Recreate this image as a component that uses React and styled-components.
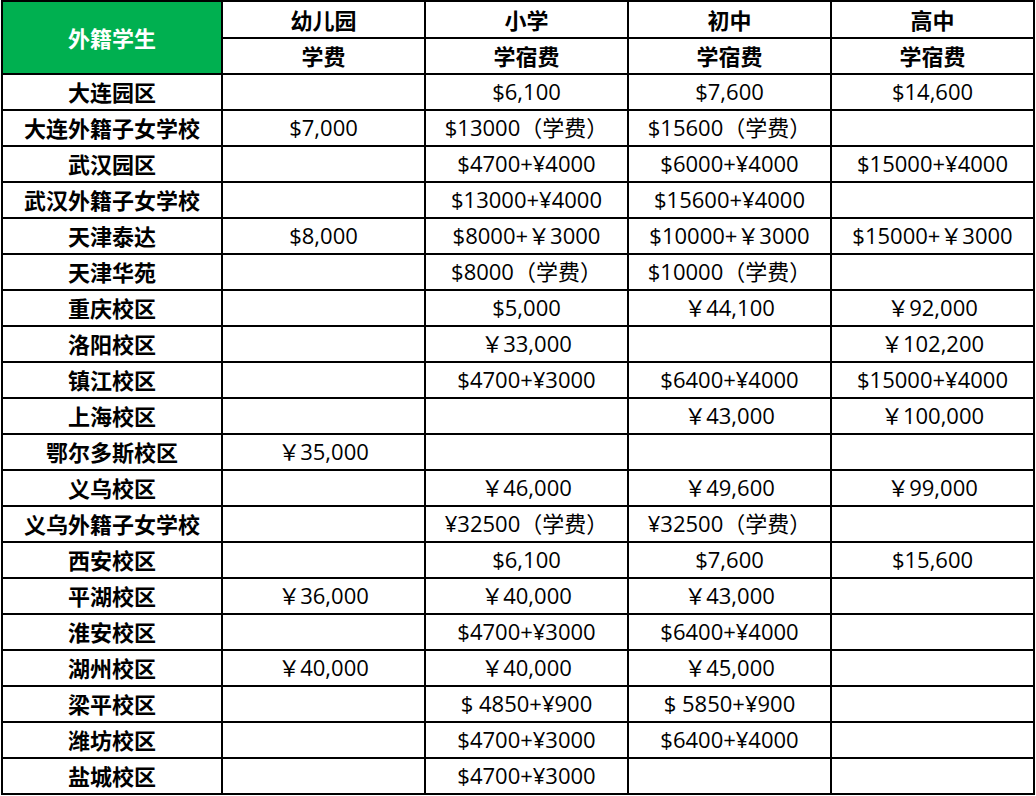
import React from "react";
import styled, { createGlobalStyle } from "styled-components";

const Global = createGlobalStyle`
  html, body { margin: 0; padding: 0; background: #fff; }
  body { font-family: "Open Sans", "Noto Sans CJK SC", sans-serif; color: #000; }
  * { box-sizing: border-box; }
`;

const Page = styled.div`
  padding: 0 0 0 1px;
`;

const Sheet = styled.div`
  display: grid;
  grid-template-columns: 220px repeat(4, 203px);
  grid-template-rows: 37px 36px repeat(20, 36px);
  width: 1034px;
  border-left: 2px solid #000;
  border-top: 2px solid #000;
`;

const Row = styled.div`
  display: contents;
`;

const BaseCell = styled.div`
  display: flex;
  align-items: center;
  justify-content: center;
  border-right: 2px solid #000;
  border-bottom: 2px solid #000;
  white-space: nowrap;
  font-size: 22px;
  line-height: 1;
`;

const Corner = styled(BaseCell)`
  grid-row: span 2;
  background: #00b050;
  color: #fff;
  font-family: "Noto Sans CJK SC", sans-serif;
  font-weight: 700;
  padding-bottom: 2px;
`;

const HeadCell = styled(BaseCell)`
  font-family: "Noto Sans CJK SC", sans-serif;
  font-weight: 700;
  padding-bottom: 2px;
`;

const LabelCell = styled(BaseCell)`
  font-family: "Noto Sans CJK SC", sans-serif;
  font-weight: 700;
  padding-bottom: 2px;
`;

const ValueCell = styled(BaseCell)`
  font-family: "Open Sans", "Noto Sans CJK SC", sans-serif;
  font-weight: 400;
  padding-bottom: 2px;
`;

const levels = [
  ["幼儿园", "学费"],
  ["小学", "学宿费"],
  ["初中", "学宿费"],
  ["高中", "学宿费"],
];

const rows = [
  ["大连园区", "", "$6,100", "$7,600", "$14,600"],
  ["大连外籍子女学校", "$7,000", "$13000（学费）", "$15600（学费）", ""],
  ["武汉园区", "", "$4700+¥4000", "$6000+¥4000", "$15000+¥4000"],
  ["武汉外籍子女学校", "", "$13000+¥4000", "$15600+¥4000", ""],
  ["天津泰达", "$8,000", "$8000+￥3000", "$10000+￥3000", "$15000+￥3000"],
  ["天津华苑", "", "$8000（学费）", "$10000（学费）", ""],
  ["重庆校区", "", "$5,000", "￥44,100", "￥92,000"],
  ["洛阳校区", "", "￥33,000", "", "￥102,200"],
  ["镇江校区", "", "$4700+¥3000", "$6400+¥4000", "$15000+¥4000"],
  ["上海校区", "", "", "￥43,000", "￥100,000"],
  ["鄂尔多斯校区", "￥35,000", "", "", ""],
  ["义乌校区", "", "￥46,000", "￥49,600", "￥99,000"],
  ["义乌外籍子女学校", "", "¥32500（学费）", "¥32500（学费）", ""],
  ["西安校区", "", "$6,100", "$7,600", "$15,600"],
  ["平湖校区", "￥36,000", "￥40,000", "￥43,000", ""],
  ["淮安校区", "", "$4700+¥3000", "$6400+¥4000", ""],
  ["湖州校区", "￥40,000", "￥40,000", "￥45,000", ""],
  ["梁平校区", "", "$ 4850+¥900", "$ 5850+¥900", ""],
  ["潍坊校区", "", "$4700+¥3000", "$6400+¥4000", ""],
  ["盐城校区", "", "$4700+¥3000", "", ""],
];

export default function App() {
  return (
    <Page>
      <Global />
      <Sheet>
        <Row>
          <Corner>外籍学生</Corner>
          {levels.map((l) => (
            <HeadCell key={l[0]}>{l[0]}</HeadCell>
          ))}
        </Row>
        <Row>
          {levels.map((l, i) => (
            <HeadCell key={i}>{l[1]}</HeadCell>
          ))}
        </Row>
        {rows.map((r) => (
          <Row key={r[0]}>
            <LabelCell>{r[0]}</LabelCell>
            {r.slice(1).map((c, i) => (
              <ValueCell key={i}>{c}</ValueCell>
            ))}
          </Row>
        ))}
      </Sheet>
    </Page>
  );
}
